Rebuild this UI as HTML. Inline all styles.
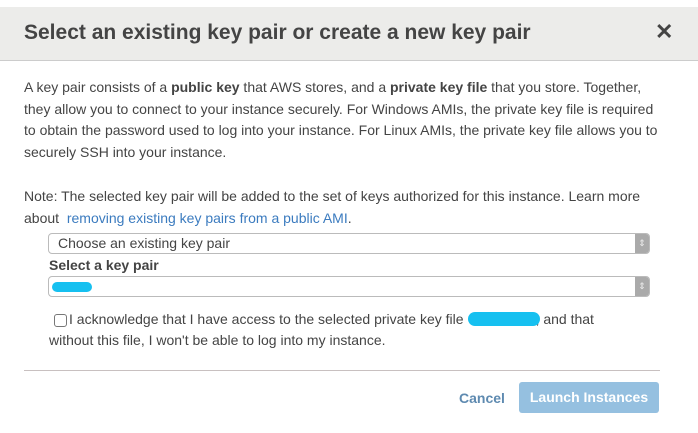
<!DOCTYPE html>
<html><head><style>
body{margin:0;width:698px;height:433px;background:#fff;font-family:"Liberation Sans",sans-serif;position:relative;overflow:hidden;color:#444}
.hdr{position:absolute;left:0;top:7px;width:698px;height:53px;background:#ececea;border-bottom:1px solid #ccc}
.hdr h1{position:absolute;left:24px;top:14px;margin:0;font-size:21px;font-weight:bold;color:#444;white-space:nowrap}
.x{position:absolute;left:655px;top:12px;font-size:22px;color:#444;font-weight:bold}
.p{position:absolute;left:24px;font-size:14px;line-height:21.7px;color:#444;white-space:nowrap}
a{color:#3b7bbf;text-decoration:none}
.sel{position:absolute;left:48px;width:600px;height:19px;border:1px solid #bbb;border-radius:4px;background:#fff;font-size:14px;line-height:19px;color:#444}
.sel .ar{position:absolute;right:0;top:0;width:14px;height:19px;background:#aaa;border-radius:0 3px 3px 0;color:#eee;font-size:9px;text-align:center;line-height:19px}
.blob{position:absolute;background:#16c0f0;border-radius:8px}
</style></head><body>
<div class="hdr"><h1>Select an existing key pair or create a new key pair</h1><div class="x">✕</div></div>
<div class="p" style="top:77px">A key pair consists of a <b>public key</b> that AWS stores, and a <b>private key file</b> that you store. Together,<br>they allow you to connect to your instance securely. For Windows AMIs, the private key file is required<br>to obtain the password used to log into your instance. For Linux AMIs, the private key file allows you to<br>securely SSH into your instance.</div>
<div class="p" style="top:186px">Note: The selected key pair will be added to the set of keys authorized for this instance. Learn more<br>about &nbsp;<a>removing existing key pairs from a public AMI</a>.</div>
<div class="sel" style="top:233px"><span style="padding-left:9px">Choose an existing key pair</span><div class="ar">⇕</div></div>
<div style="position:absolute;left:49px;top:257px;font-size:14px;font-weight:bold;color:#444">Select a key pair</div>
<div class="sel" style="top:276px"><div class="blob" style="left:3px;top:5px;width:40px;height:10px"></div><div class="ar">⇕</div></div>
<div style="position:absolute;left:54px;top:314px;width:11px;height:11px;border:1px solid #777;border-radius:3px"></div>
<div class="p" style="top:309px;left:69px">I acknowledge that I have access to the selected private key file<span style="display:inline-block;width:72px"></span>, and that</div>
<div class="p" style="top:330px;left:49px">without this file, I won't be able to log into my instance.</div>
<div class="blob" style="left:468px;top:312px;width:72px;height:14px"></div>
<div style="position:absolute;left:24px;top:370px;width:636px;height:1px;background:#c8c0c0"></div>
<div style="position:absolute;left:459px;top:390px;font-size:14px;font-weight:bold;color:#5e8ab0">Cancel</div>
<div style="position:absolute;left:519px;top:382px;width:140px;height:31px;background:#95c0e0;border-radius:3px;color:#fff;font-size:14px;font-weight:bold;text-align:center;line-height:31px">Launch Instances</div>
</body></html>
